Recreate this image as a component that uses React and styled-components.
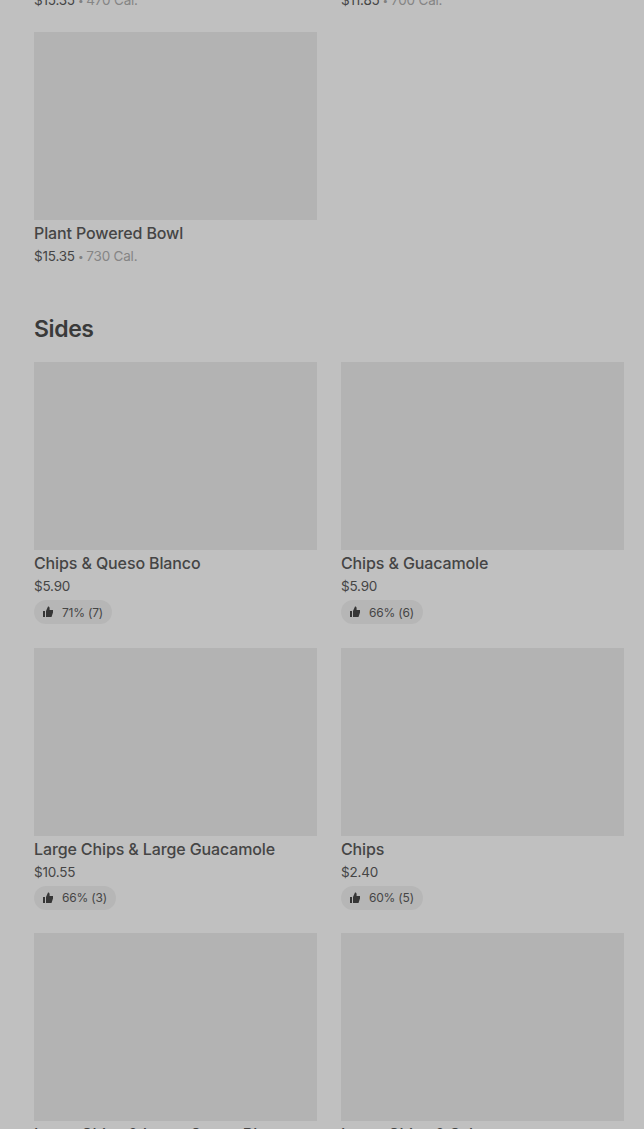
import React from "react";
import styled, { createGlobalStyle } from "styled-components";

const Global = createGlobalStyle`
  html, body { margin: 0; padding: 0; height: 1129px; overflow: hidden; background: #c0c0c0; }
  body { font-family: Inter, "Noto Sans", "Liberation Sans", sans-serif; }
`;
const Page = styled.main`
  padding: 0 20px 0 34px;
  margin-top: -224px;
`;
const Section = styled.section`
  & + & { margin-top: 47px; }
`;
const Heading = styled.h2`
  margin: 0 0 17px;
  font-size: 23px;
  line-height: 32px;
  font-weight: 600;
  letter-spacing: -0.4px;
  color: #3a3a3a;
`;
const Grid = styled.div`
  display: grid;
  grid-template-columns: 283px 283px;
  column-gap: 24px;
  row-gap: ${(p) => p.$gap}px;
  align-items: start;
`;
const Card = styled.article`
  display: flex;
  flex-direction: column;
`;
const Photo = styled.div`
  height: 188px;
  background: #b3b3b3;
`;
const Title = styled.h3`
  margin: 2px 0 0;
  font-size: 16px;
  line-height: 22px;
  font-weight: 500;
  letter-spacing: -0.12px;
  color: #454545;
`;
const Meta = styled.div`
  display: flex;
  align-items: center;
  margin-top: 2px;
  font-size: 13.5px;
  line-height: 20px;
  letter-spacing: -0.2px;
  color: #454545;
`;
const Dot = styled.span`
  margin: 0 3px;
  color: #808080;
  font-size: 10px;
`;
const Cal = styled.span`
  color: #858585;
`;
const Badge = styled.div`
  display: inline-flex;
  align-self: flex-start;
  align-items: center;
  gap: 8px;
  height: 24px;
  margin-top: 4px;
  padding: 0 9px 0 8px;
  border-radius: 12px;
  background: #b6b6b6;
  font-size: 12px;
  letter-spacing: -0.2px;
  color: #454545;
`;
const Thumb = () => (
  <svg width="12" height="12" viewBox="0 0 12 12" fill="#363636">
    <path d="M1 5h2v6H1zM4 5l2-4.5c1 0 1.6.7 1.6 1.7V4H11v2.5L9.5 11H4z" />
  </svg>
);

const mains = [
  { name: "Veggie Full Bowl", price: "$15.35", cal: "470 Cal." },
  { name: "Chicken Bowl", price: "$11.85", cal: "700 Cal." },
  { name: "Plant Powered Bowl", price: "$15.35", cal: "730 Cal." },
];
const sides = [
  { name: "Chips & Queso Blanco", price: "$5.90", rating: "71% (7)" },
  { name: "Chips & Guacamole", price: "$5.90", rating: "66% (6)" },
  { name: "Large Chips & Large Guacamole", price: "$10.55", rating: "66% (3)" },
  { name: "Chips", price: "$2.40", rating: "60% (5)" },
  { name: "Large Chips & Large Queso Blanco", price: "$10.55" },
  { name: "Large Chips & Salsa", price: "$4.35" },
];

const Item = ({ item }) => (
  <Card>
    <Photo />
    <Title>{item.name}</Title>
    <Meta>
      {item.price}
      {item.cal && (
        <>
          <Dot>•</Dot>
          <Cal>{item.cal}</Cal>
        </>
      )}
    </Meta>
    {item.rating && (
      <Badge>
        <Thumb />
        {item.rating}
      </Badge>
    )}
  </Card>
);

export default function App() {
  return (
    <>
      <Global />
      <Page>
        <Section>
          <Grid $gap={22}>{mains.map((m) => <Item key={m.name} item={m} />)}</Grid>
        </Section>
        <Section>
          <Heading>Sides</Heading>
          <Grid $gap={23.5}>{sides.map((m) => <Item key={m.name} item={m} />)}</Grid>
        </Section>
      </Page>
    </>
  );
}
